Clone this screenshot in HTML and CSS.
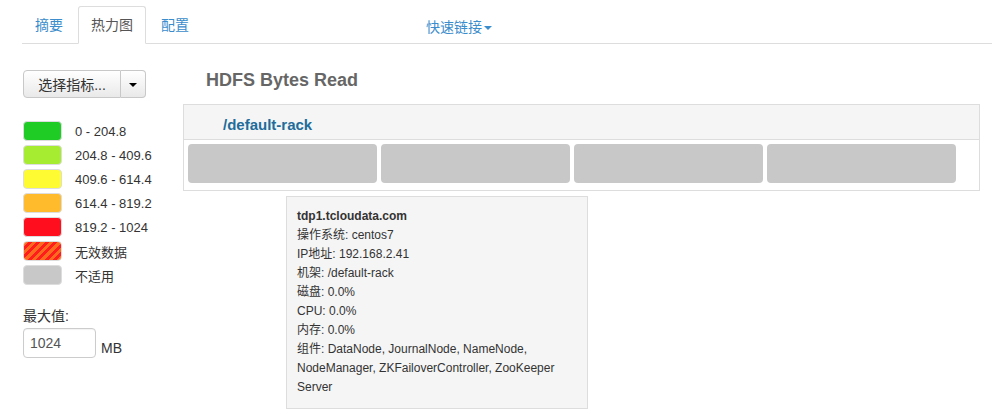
FILE: index.html
```html
<!DOCTYPE html>
<html lang="zh">
<head>
<meta charset="utf-8">
<title>Heatmap</title>
<link rel="stylesheet" href="styles.css">
</head>
<body>
<div class="page">
  <ul class="tabs">
    <li class="tab"><a>摘要</a></li>
    <li class="tab active"><a>热力图</a></li>
    <li class="tab"><a>配置</a></li>
    <li class="quick"><a>快速链接<span class="caret"></span></a></li>
  </ul>
  <div class="main">
    <div class="side">
      <div class="btn-group">
        <button class="btn btn-main">选择指标...</button>
        <button class="btn btn-caret"><span class="caret dark"></span></button>
      </div>
      <ul class="legend">
        <li><span class="sw c1"></span><span class="lbl">0 - 204.8</span></li>
        <li><span class="sw c2"></span><span class="lbl">204.8 - 409.6</span></li>
        <li><span class="sw c3"></span><span class="lbl">409.6 - 614.4</span></li>
        <li><span class="sw c4"></span><span class="lbl">614.4 - 819.2</span></li>
        <li><span class="sw c5"></span><span class="lbl">819.2 - 1024</span></li>
        <li><span class="sw c6"></span><span class="lbl">无效数据</span></li>
        <li><span class="sw c7"></span><span class="lbl">不适用</span></li>
      </ul>
      <div class="max">
        <div class="max-label">最大值:</div>
        <div class="max-row"><input class="max-input" type="text" value="1024"><span class="unit">MB</span></div>
      </div>
    </div>
    <div class="content">
      <h2 class="title">HDFS Bytes Read</h2>
      <div class="rack">
        <div class="rack-head"><a class="rack-name">/default-rack</a></div>
        <div class="hosts">
          <div class="host"></div>
          <div class="host"></div>
          <div class="host"></div>
          <div class="host"></div>
        </div>
      </div>
      <div class="tooltip">
        <div class="tt-title">tdp1.tcloudata.com</div>
        <div>操作系统: centos7</div>
        <div>IP地址: 192.168.2.41</div>
        <div>机架: /default-rack</div>
        <div>磁盘: 0.0%</div>
        <div>CPU: 0.0%</div>
        <div>内存: 0.0%</div>
        <div>组件: DataNode, JournalNode, NameNode,<br>NodeManager, ZKFailoverController, ZooKeeper<br>Server</div>
      </div>
    </div>
  </div>
</div>
</body>
</html>
```
FILE: styles.css
```css
html, body {
  margin: 0;
  padding: 0;
  background: #fff;
}
body {
  font-family: "Liberation Sans", "Noto Sans CJK SC", sans-serif;
  color: #333;
  font-size: 13px;
  min-height: 417px;
}
.page {
  padding: 6px 4px 0 22px;
}
.tabs {
  list-style: none;
  margin: 0;
  padding: 0;
  display: flex;
  border-bottom: 1px solid #ddd;
}
.tab {
  margin-right: 2px;
  margin-bottom: -1px;
}
.tab a {
  display: block;
  padding: 8px 12px;
  line-height: 20px;
  font-size: 14px;
  color: #3b8dcc;
  border: 1px solid transparent;
  border-radius: 3px 3px 0 0;
}
.tab.active a {
  color: #555;
  background: #fff;
  border-color: #ddd;
  border-bottom-color: #fff;
}
.quick {
  margin-left: 222px;
  padding-top: 11px;
}
.quick a {
  font-size: 14px;
  line-height: 20px;
  color: #3b8dcc;
}
.caret {
  display: inline-block;
  width: 0;
  height: 0;
  margin-left: 2px;
  vertical-align: middle;
  border-top: 4px solid #3b8dcc;
  border-left: 4px solid transparent;
  border-right: 4px solid transparent;
}
.caret.dark {
  border-top-color: #000;
  margin: 0;
}
.main {
  display: flex;
  padding-left: 1px;
  min-height: 373px;
}
.side {
  width: 160px;
  padding-top: 26px;
}
.btn-group {
  display: flex;
  height: 28px;
}
.btn {
  font-family: inherit;
  font-size: 14px;
  color: #333;
  background: linear-gradient(#fff, #e9e9e9);
  border: 1px solid #c8c8c8;
  margin: 0;
  height: 28px;
  padding: 0;
  box-shadow: inset 0 1px 0 rgba(255,255,255,0.3);
}
.btn-main {
  width: 98px;
  border-radius: 4px 0 0 4px;
  padding-left: 0;
}
.btn-caret {
  width: 25px;
  border-left: none;
  border-radius: 0 4px 4px 0;
}
.legend {
  list-style: none;
  margin: 23px 0 0 0;
  padding: 0;
}
.legend li {
  display: flex;
  align-items: center;
  height: 20px;
  margin-bottom: 4px;
}
.sw {
  width: 37px;
  height: 18px;
  border: 1px solid #ddd;
  border-radius: 4px;
  margin-right: 13px;
  flex: none;
}
.c1 { background: #1fcc25; }
.c2 { background: #a6ec30; }
.c3 { background: #fffb33; }
.c4 { background: #ffbb2c; }
.c5 { background: #ff0f1e; }
.c6 {
  background: repeating-linear-gradient(135deg, #ff6a1e 0 3px, #ff1c1c 3px 6px);
}
.c7 { background: #c8c8c8; }
.lbl {
  font-size: 13px;
  color: #333;
}
.max {
  margin-top: 22px;
}
.max-label {
  font-size: 14px;
  line-height: 18px;
  color: #333;
}
.max-row {
  display: flex;
  align-items: flex-end;
  margin-top: 3px;
}
.max-input {
  box-sizing: border-box;
  width: 73px;
  height: 30px;
  border: 1px solid #ccc;
  border-radius: 4px;
  font-family: inherit;
  font-size: 14px;
  color: #555;
  padding: 0 6px;
  margin: 0;
  box-shadow: inset 0 1px 1px rgba(0,0,0,0.05);
}
.unit {
  font-size: 14px;
  margin-left: 5px;
  line-height: 20px;
  margin-bottom: 0;
}
.content {
  position: relative;
  padding-top: 0;
}
.title {
  margin: 25px 0 0 23px;
  font-size: 18px;
  line-height: 22px;
  font-weight: bold;
  color: #666;
}
.rack {
  margin-top: 13px;
  width: 795px;
  border: 1px solid #ddd;
}
.rack-head {
  background: #f5f5f5;
  height: 34px;
  border-bottom: 1px solid #ddd;
  display: flex;
  align-items: center;
  padding-left: 39px;
}
.rack-name {
  font-size: 15px;
  font-weight: bold;
  color: #216c9b;
  margin-top: 4px;
}
.hosts {
  display: flex;
  gap: 4px;
  padding: 4px 4px 7px 4px;
}
.host {
  width: 189px;
  height: 39px;
  background: #c8c8c8;
  border-radius: 4px;
}
.tooltip {
  position: absolute;
  left: 103px;
  top: 152px;
  width: 280px;
  padding: 10px 10px 11px 10px;
  background: #f5f5f5;
  border: 1px solid #ddd;
  font-size: 12px;
  line-height: 19px;
  color: #333;
}
.tt-title {
  font-weight: bold;
}
```
